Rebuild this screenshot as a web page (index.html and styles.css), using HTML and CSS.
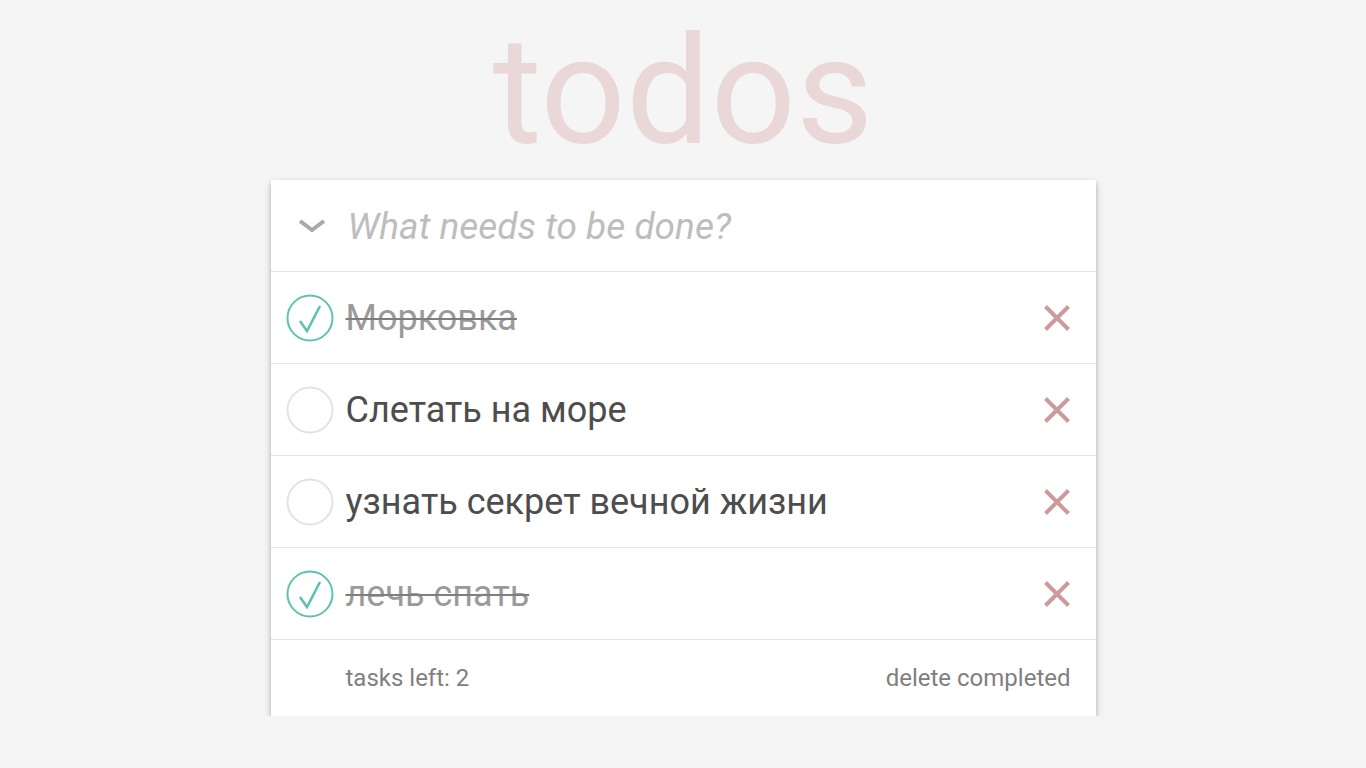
FILE: index.html
```html
<!DOCTYPE html>
<html lang="ru">
<head>
<meta charset="utf-8">
<title>todos</title>
<link rel="stylesheet" href="styles.css">
</head>
<body>
<section class="app">
  <h1 class="title">todos</h1>
  <div class="card">
    <header class="new-row">
      <span class="toggle-all">
        <svg width="28" height="16" viewBox="0 0 28 16"><polyline points="2,3 14,12 26,3" fill="none" stroke="#a9a9a9" stroke-width="4"/></svg>
      </span>
      <span class="placeholder">What needs to be done?</span>
    </header>
    <ul class="list">
      <li class="item done">
        <span class="check">
          <svg width="48" height="48" viewBox="0 0 48 48"><circle cx="24" cy="24" r="22.5" fill="none" stroke="#5dc2af" stroke-width="2"/><polyline points="14,27 21,37 34,12" fill="none" stroke="#5dc2af" stroke-width="2.6"/></svg>
        </span>
        <span class="label">Морковка</span>
        <span class="del"><svg width="28" height="28" viewBox="0 0 28 28"><path d="M2.5 2.5L25.5 25.5M25.5 2.5L2.5 25.5" stroke="#cc9a9a" stroke-width="4"/></svg></span>
      </li>
      <li class="item">
        <span class="check">
          <svg width="48" height="48" viewBox="0 0 48 48"><circle cx="24" cy="24" r="22.5" fill="none" stroke="#e3e3e3" stroke-width="2"/></svg>
        </span>
        <span class="label">Слетать на море</span>
        <span class="del"><svg width="28" height="28" viewBox="0 0 28 28"><path d="M2.5 2.5L25.5 25.5M25.5 2.5L2.5 25.5" stroke="#cc9a9a" stroke-width="4"/></svg></span>
      </li>
      <li class="item">
        <span class="check">
          <svg width="48" height="48" viewBox="0 0 48 48"><circle cx="24" cy="24" r="22.5" fill="none" stroke="#e3e3e3" stroke-width="2"/></svg>
        </span>
        <span class="label">узнать секрет вечной жизни</span>
        <span class="del"><svg width="28" height="28" viewBox="0 0 28 28"><path d="M2.5 2.5L25.5 25.5M25.5 2.5L2.5 25.5" stroke="#cc9a9a" stroke-width="4"/></svg></span>
      </li>
      <li class="item done">
        <span class="check">
          <svg width="48" height="48" viewBox="0 0 48 48"><circle cx="24" cy="24" r="22.5" fill="none" stroke="#5dc2af" stroke-width="2"/><polyline points="14,27 21,37 34,12" fill="none" stroke="#5dc2af" stroke-width="2.6"/></svg>
        </span>
        <span class="label">лечь спать</span>
        <span class="del"><svg width="28" height="28" viewBox="0 0 28 28"><path d="M2.5 2.5L25.5 25.5M25.5 2.5L2.5 25.5" stroke="#cc9a9a" stroke-width="4"/></svg></span>
      </li>
    </ul>
    <footer class="footer">
      <span class="count">tasks left: 2</span>
      <span class="clear">delete completed</span>
    </footer>
  </div>
</section>
</body>
</html>
```
FILE: styles.css
```css
html, body {
  margin: 0;
  padding: 0;
}
body {
  background: #f5f5f5;
  font-family: Roboto, "Noto Sans", "Liberation Sans", sans-serif;
  color: #4d4d4d;
}
.app {
  width: 825px;
  margin: 0 auto;
}
.title {
  margin: 0;
  padding-top: 4px;
  height: 176px;
  line-height: 176px;
  text-align: center;
  font-size: 150px;
  font-weight: 400;
  color: rgba(175, 47, 47, 0.15);
}
.card {
  background: #fff;
  box-shadow: 0 2px 4px rgba(0, 0, 0, 0.22), 0 4px 9px rgba(0, 0, 0, 0.14);
}
.new-row {
  height: 91px;
  border-bottom: 1px solid #e6e6e6;
  display: flex;
  align-items: center;
}
.toggle-all {
  width: 28px;
  margin-left: 27px;
  margin-right: 22px;
  display: flex;
  align-items: center;
}
.toggle-all svg {
  display: block;
}
.placeholder {
  font-size: 37px;
  font-style: italic;
  color: #bdbdbd;
  margin-top: 1px;
}
.list {
  list-style: none;
  margin: 0;
  padding: 0;
}
.item {
  height: 91px;
  border-bottom: 1px solid #e6e6e6;
  display: flex;
  align-items: center;
  padding-left: 15px;
  padding-right: 25px;
}
.check {
  width: 48px;
  height: 48px;
  margin-right: 12px;
}
.check svg {
  display: block;
}
.label {
  flex: 1;
  font-size: 36px;
  color: #4d4d4d;
  white-space: nowrap;
}
.item.done .label {
  color: #9a9a9a;
  text-decoration: line-through;
  text-decoration-color: #7e7e7e;
  text-decoration-thickness: 2px;
}
.del {
  width: 28px;
  height: 28px;
}
.del svg {
  display: block;
}
.footer {
  height: 76px;
  display: flex;
  align-items: center;
  justify-content: space-between;
  padding: 0 25px 0 75px;
  font-size: 24px;
  color: #808080;
}
```
